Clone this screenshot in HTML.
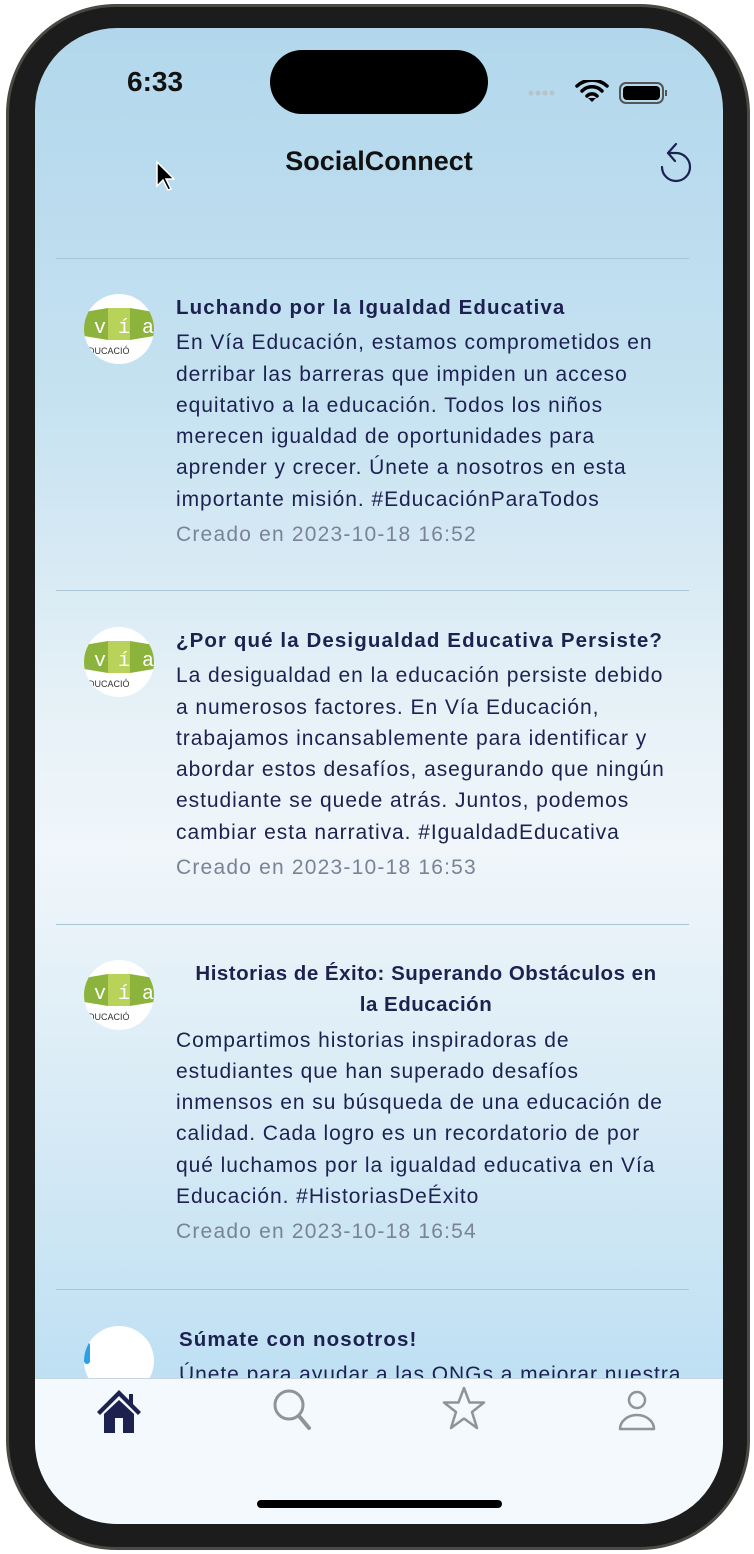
<!DOCTYPE html>
<html><head><meta charset="utf-8"><style>
*{margin:0;padding:0;box-sizing:border-box}
body{width:754px;height:1554px;background:#fff;position:relative;overflow:hidden;font-family:"Liberation Sans",sans-serif}
.phone{position:absolute;left:6px;top:4px;width:744px;height:1546px;border-radius:110px;background:#1c1c1c;border:3px solid #4a4a44}
.screen{position:absolute;left:35px;top:28px;width:688px;height:1496px;border-radius:82px;overflow:hidden;
background:linear-gradient(180deg,#b2d7ec 0%,#c6e2f1 25%,#e6f1f7 45%,#f0f6fa 55%,#d4e9f5 75%,#bcdff3 92%)}
.island{position:absolute;left:235px;top:22px;width:218px;height:64px;border-radius:32px;background:#000}
.time{position:absolute;left:92px;top:38px;font-size:28px;font-weight:bold;color:#111}
.title{position:absolute;left:0;width:688px;top:118px;text-align:center;font-size:27px;font-weight:bold;color:#111}
.sep{position:absolute;left:21px;width:633px;height:1px;background:#a9c6d6}
.av{position:absolute;left:49px;width:70px;height:70px;border-radius:50%;background:#fff;overflow:hidden}
.post{position:absolute;left:141px;width:540px;color:#1c2150;font-size:21px;line-height:31.3px;white-space:nowrap;letter-spacing:0.95px}
.post b{display:block;font-size:20.5px;color:#1c2150;margin-bottom:4px;letter-spacing:1.1px}
.date{color:#7a8396;margin-top:4px;letter-spacing:1.2px}
.tab{position:absolute;left:0;top:1350px;width:688px;height:146px;background:#f3f9fc;border-top:1px solid #c6d6df}
.home{position:absolute;left:222px;top:1472px;width:245px;height:8px;border-radius:4px;background:#000}
</style></head><body>
<div class="phone"></div>
<div class="screen">
<div class="island"></div>
<div class="time">6:33</div>
<svg style="position:absolute;left:492px;top:52px" width="160" height="26">
<g fill="#b9c2c8"><circle cx="4" cy="13" r="2.5"/><circle cx="11" cy="13" r="2.5"/><circle cx="18" cy="13" r="2.5"/><circle cx="25" cy="13" r="2.5"/></g>
<path d="M50 6a22 22 0 0 1 30 0M55 11a14 14 0 0 1 20 0M60 16a7 7 0 0 1 10 0" stroke="#000" stroke-width="3.5" fill="none" stroke-linecap="round"/><path d="M61 18l4 4 4-4z" fill="#000"/>
<rect x="93" y="3" width="43" height="20" rx="6" fill="none" stroke="#555" stroke-width="2"/><rect x="96" y="6" width="37" height="14" rx="4" fill="#000"/><rect x="138" y="10" width="2" height="6" fill="#555"/>
</svg>
<div class="title">SocialConnect</div>
<svg style="position:absolute;left:120px;top:132px" width="20" height="32"><path d="M2 2v24l6-6 5 10 3-1-5-10h8z" fill="#000" stroke="#fff" stroke-width="1.5"/></svg>
<svg style="position:absolute;left:610px;top:107px" width="50" height="50"><path d="M23 18H31A14 14 0 1 1 17 32" fill="none" stroke="#1c2150" stroke-width="2.2" stroke-linecap="round"/><path d="M31 9L23 18 30 26" fill="none" stroke="#1c2150" stroke-width="2.2" stroke-linecap="round" stroke-linejoin="round"/></svg>

<div class="sep" style="top:230px"></div>
<div class="av" style="top:266px"><svg width="70" height="70"><path d="M0 18L24 14 35 18 46 14 70 18V42L46 46 35 42 24 46 0 42z" fill="#8cb33b"/><rect x="24" y="14" width="22" height="32" fill="#b9d35a"/><text x="10" y="39" font-size="20" fill="#fff" font-family="Liberation Mono">v í a</text><text x="4" y="60" font-size="9" fill="#333">DUCACIÓ</text></svg></div>
<div class="post" style="top:264px"><b>Luchando por la Igualdad Educativa</b>En Vía Educación, estamos comprometidos en<br>derribar las barreras que impiden un acceso<br>equitativo a la educación. Todos los niños<br>merecen igualdad de oportunidades para<br>aprender y crecer. Únete a nosotros en esta<br>importante misión. #EducaciónParaTodos<div class="date">Creado en 2023-10-18 16:52</div></div>

<div class="sep" style="top:562px"></div>
<div class="av" style="top:599px"><svg width="70" height="70"><path d="M0 18L24 14 35 18 46 14 70 18V42L46 46 35 42 24 46 0 42z" fill="#8cb33b"/><rect x="24" y="14" width="22" height="32" fill="#b9d35a"/><text x="10" y="39" font-size="20" fill="#fff" font-family="Liberation Mono">v í a</text><text x="4" y="60" font-size="9" fill="#333">DUCACIÓ</text></svg></div>
<div class="post" style="top:597px"><b>¿Por qué la Desigualdad Educativa Persiste?</b>La desigualdad en la educación persiste debido<br>a numerosos factores. En Vía Educación,<br>trabajamos incansablemente para identificar y<br>abordar estos desafíos, asegurando que ningún<br>estudiante se quede atrás. Juntos, podemos<br>cambiar esta narrativa. #IgualdadEducativa<div class="date">Creado en 2023-10-18 16:53</div></div>

<div class="sep" style="top:896px"></div>
<div class="av" style="top:932px"><svg width="70" height="70"><path d="M0 18L24 14 35 18 46 14 70 18V42L46 46 35 42 24 46 0 42z" fill="#8cb33b"/><rect x="24" y="14" width="22" height="32" fill="#b9d35a"/><text x="10" y="39" font-size="20" fill="#fff" font-family="Liberation Mono">v í a</text><text x="4" y="60" font-size="9" fill="#333">DUCACIÓ</text></svg></div>
<div class="post" style="top:930px"><b style="text-align:center;width:500px;letter-spacing:0.5px">Historias de Éxito: Superando Obstáculos en<br>la Educación</b>Compartimos historias inspiradoras de<br>estudiantes que han superado desafíos<br>inmensos en su búsqueda de una educación de<br>calidad. Cada logro es un recordatorio de por<br>qué luchamos por la igualdad educativa en Vía<br>Educación. #HistoriasDeÉxito<div class="date">Creado en 2023-10-18 16:54</div></div>

<div class="sep" style="top:1261px"></div>
<div class="av" style="top:1298px"><div style="position:absolute;left:0;top:16px;width:6px;height:22px;background:#2aa0e6;border-radius:3px"></div></div>
<div class="post" style="top:1296px;left:144px"><b>Súmate con nosotros!</b>Únete para ayudar a las ONGs a mejorar nuestra</div>

<div class="tab">
<svg style="position:absolute;left:60px;top:8px" width="54" height="48"><path d="M24 3L2 25l3 3L24 9l19 19 3-3-8-8V7h-4v6z" fill="#1c2150"/><path d="M9 27L24 13 39 27V46H9z" fill="#1c2150"/><rect x="20" y="31" width="8" height="15" fill="#f3f9fc"/></svg>
<svg style="position:absolute;left:236px;top:8px" width="46" height="46"><circle cx="18" cy="18" r="14" fill="none" stroke="#8f9496" stroke-width="3"/><path d="M28 29l10 12" stroke="#8f9496" stroke-width="4" stroke-linecap="round"/></svg>
<svg style="position:absolute;left:406px;top:6px" width="46" height="46"><path d="M23 3l5.5 14.5H43L31 27l5 16-13-9.5L10 43l5-16L3 17.5h14.5z" fill="none" stroke="#8f9496" stroke-width="2.5" stroke-linejoin="round"/></svg>
<svg style="position:absolute;left:582px;top:10px" width="40" height="44"><circle cx="20" cy="11" r="8" fill="none" stroke="#8f9496" stroke-width="2.5"/><path d="M3 40a17 14 0 0 1 34 0z" fill="none" stroke="#8f9496" stroke-width="2.5" stroke-linejoin="round"/></svg>
</div>
<div class="home"></div>
</div>
</body></html>
